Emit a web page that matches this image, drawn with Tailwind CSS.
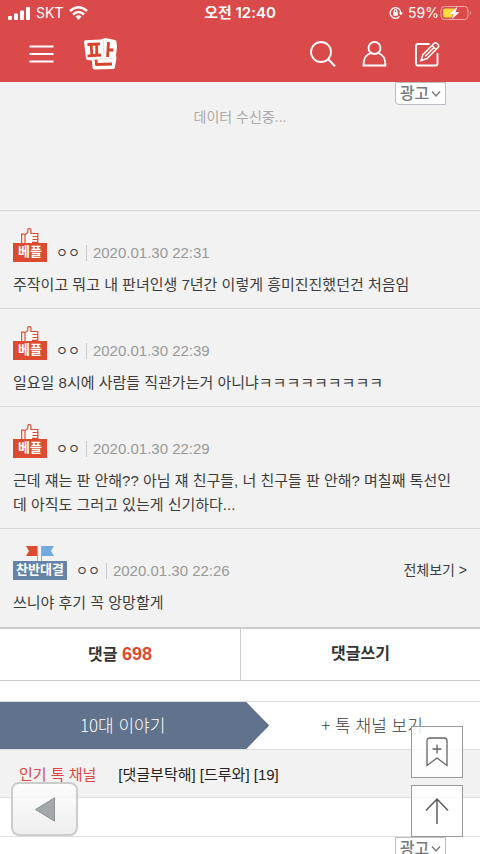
<!DOCTYPE html>
<html lang="ko">
<head>
<meta charset="utf-8">
<meta name="viewport" content="width=device-width, initial-scale=1">
<title>판</title>
<script src="https://cdn.jsdelivr.net/npm/@tailwindcss/browser@4"></script>
</head>
<body class="bg-white font-['Liberation_Sans','Noto_Sans_CJK_KR',sans-serif] text-[#3c3c3c]">
<svg class="hidden">
  <symbol id="thumb" viewBox="0 0 18 15">
    <path d="M1 15V6.500H4.500L7 4.500V1H10V5.500H16.500V15Z" fill="#fff"/>
    <path d="M.7 15V6.200H3.500M4 15V6.500L6.800 4.500V1.600Q7 .6 8.400.6T9.900 2V5.500H16.800V15M11.500 8.500H17M11.500 11.500H17M11 14.400H17" fill="none" stroke="#dc4a30" stroke-width="1.200"/>
  </symbol>
</svg>

<header class="bg-[#da4a4a] text-white">
  <div class="grid h-[26px] grid-cols-[1fr_auto_1fr] items-center px-2 font-['Inter','Noto_Sans_CJK_KR',sans-serif] leading-4">
    <div class="flex items-center gap-[6px]">
      <svg class="h-[13px] w-[22px]" viewBox="0 0 22 13" fill="#fff"><rect y="9" width="4" height="4" rx="1"/><rect x="6" y="6.500" width="4" height="6.500" rx="1"/><rect x="12" y="3.500" width="4" height="9.500" rx="1"/><rect x="18" width="4" height="13" rx="1"/></svg>
      <span class="text-sm">SKT</span>
      <svg class="h-[14px] w-[19px]" viewBox="0 0 19 14" fill="none" stroke="#fff" stroke-width="2.500"><path d="M1 5Q9.500-2.500 18 5M4 8.500Q9.500 3.500 15 8.500"/><path d="M6.500 10.500Q9.500 8 12.500 10.500L9.500 14Z" fill="#fff" stroke="none"/></svg>
    </div>
    <span class="text-[15px] font-semibold">오전 12:40</span>
    <div class="flex items-center justify-end gap-[5px]">
      <svg class="h-[14px] w-[14px]" viewBox="0 0 14 14" fill="none" stroke="#fff" stroke-width="1.300"><path d="M10.500 10.500A5.300 5.300 0 1 1 11.800 7"/><path d="M9.800 6.500H14L11.900 9.300Z" fill="#fff" stroke="none"/><rect x="4.200" y="6" width="4.600" height="3.700" rx=".5" fill="#fff" stroke="none"/><path d="M5.200 6V5a1.300 1.300 0 0 1 2.600 0V6"/></svg>
      <span class="text-sm">59%</span>
      <svg class="-ml-1 h-[16px] w-[32px]" viewBox="0 0 32 16"><rect x="1" y="1.500" width="27" height="13" rx="3.500" fill="none" stroke="#efa6a4"/><path d="M30 6Q32 8 30 10Z" fill="#efa6a4"/><path d="M5 3.500H15L10 9H13L11.500 12.500H5Q3 12.500 3 10.500V5.500Q3 3.500 5 3.500Z" fill="#fbdc3b"/><path d="M17.500 1.500L9.500 9H13.500L11.500 14.500L19.500 7.200H15.500Z" fill="#fff"/></svg>
    </div>
  </div>
  <nav class="flex h-14 items-center pr-[40px] pl-[29px]" aria-label="주 메뉴">
    <button type="button" aria-label="메뉴"><svg class="h-[18px] w-[25px]" viewBox="0 0 25 18" stroke="#fff" stroke-width="1.800"><path d="M.5 1.500H24.500M.5 9H24.500M.5 16.500H24.500"/></svg></button>
    <a href="#" class="ml-[30px]" aria-label="판"><svg class="h-8 w-[33px]" viewBox="0 0 33 32">
      <path d="M0 3.500Q0 2.500 1.500 2.300L17 1.500L21 0L31 2Q32.500 2.500 32.500 4L33 9L32 17L32.500 20L31 29Q30.800 31 29 31L10.500 31.500Q8.500 31.500 8.500 29.500L8 22.500L3.500 22Q2 21.500 2 20Z" fill="#fff"/>
      <g fill="none" stroke="#d9432c" stroke-width="2.800"><path d="M3.500 6.500L16 5.800M3.500 17.800L17 17M7.200 7L7.800 17M12.700 7V17"/><path d="M24.500 4L23.500 19M24 12H29.500"/><path d="M12 21.500L12.500 26.500L28 26"/></g>
      <path d="M19.500 2L20 19.500M10 21.500L29 20.500" stroke="#e3c8c3" stroke-width=".7" fill="none"/>
    </svg></a>
    <div class="ml-auto flex items-center gap-[26px]">
      <button type="button" aria-label="검색"><svg class="h-[26px] w-[26px]" viewBox="0 0 26 26" fill="none" stroke="#fff" stroke-width="1.800"><circle cx="11" cy="11" r="10"/><path d="M18 18L25 25.200" stroke-width="2"/></svg></button>
      <button type="button" aria-label="내 정보"><svg class="h-[26px] w-[26px]" viewBox="0 0 26 26" fill="none" stroke="#fff" stroke-width="1.800"><circle cx="12.500" cy="7" r="6"/><path d="M9 12Q1.500 14 1.500 24.500H23.500Q23.500 14 16 12"/></svg></button>
      <button type="button" aria-label="글쓰기"><svg class="h-[26px] w-[26px]" viewBox="0 0 26 26" fill="none" stroke="#fff" stroke-width="1.800"><path d="M15.500 3H4Q2 3 2 5V22.500Q2 24.500 4 24.500H21.500Q23.500 24.500 23.500 22.500V12"/><path d="M7 19.500L9 13.500L20 2.500Q21.500 1 23 2.500L24 3.500Q25.500 5 24 6.500L13 17.500ZM18 4.500L22 8.500M11 15.500L20 6.500" stroke-width="1.500"/></svg></button>
    </div>
  </nav>
</header>

<main>
  <section class="relative h-[129px] border-b border-[#d6d6d6] bg-[#f2f2f2] pt-6 text-center">
    <button type="button" class="absolute top-0 right-[34px] flex h-[23px] w-[51px] items-center justify-center gap-[2px] rounded-bl border border-[#b9bec5] bg-white text-[16px] font-medium text-[#757a80]">광고<svg class="h-2 w-[10px]" viewBox="0 0 10 8" fill="none" stroke="#757a80" stroke-width="1.400"><path d="M1 1.500L5 6L9 1.500"/></svg></button>
    <p class="text-[14px] leading-[23px] text-[#aaa]">데이터 수신중...</p>
  </section>

  <section class="bg-[#f2f2f2]" aria-label="베스트 댓글">
    <article class="border-b border-[#d6d6d6] px-[13px] pt-[17px] pb-[11px]">
      <div class="flex items-end">
        <div class="flex w-[34px] flex-col items-center"><svg class="h-[15px] w-[18px]"><use href="#thumb"/></svg><span class="h-[19px] w-full bg-[#dc4a30] text-center text-[13px] leading-[18px] font-bold text-white">베플</span></div>
        <div class="flex h-[19px] items-center"><span class="ml-[9px] text-[13px]">ㅇㅇ</span><span class="mx-[6px] h-4 w-px bg-[#ccc]"></span><time class="text-[15px] leading-5 text-[#999]">2020.01.30 22:31</time></div>
      </div>
      <p class="mt-[11px] text-[15px] leading-6">주작이고 뭐고 내 판녀인생 7년간 이렇게 흥미진진했던건 처음임</p>
    </article>
    <article class="border-b border-[#d6d6d6] px-[13px] pt-[17px] pb-[11px]">
      <div class="flex items-end">
        <div class="flex w-[34px] flex-col items-center"><svg class="h-[15px] w-[18px]"><use href="#thumb"/></svg><span class="h-[19px] w-full bg-[#dc4a30] text-center text-[13px] leading-[18px] font-bold text-white">베플</span></div>
        <div class="flex h-[19px] items-center"><span class="ml-[9px] text-[13px]">ㅇㅇ</span><span class="mx-[6px] h-4 w-px bg-[#ccc]"></span><time class="text-[15px] leading-5 text-[#999]">2020.01.30 22:39</time></div>
      </div>
      <p class="mt-[11px] text-[15px] leading-6">일요일 8시에 사람들 직관가는거 아니냐ㅋㅋㅋㅋㅋㅋㅋㅋㅋ</p>
    </article>
    <article class="border-b border-[#d6d6d6] px-[13px] pt-[17px] pb-[11px]">
      <div class="flex items-end">
        <div class="flex w-[34px] flex-col items-center"><svg class="h-[15px] w-[18px]"><use href="#thumb"/></svg><span class="h-[19px] w-full bg-[#dc4a30] text-center text-[13px] leading-[18px] font-bold text-white">베플</span></div>
        <div class="flex h-[19px] items-center"><span class="ml-[9px] text-[13px]">ㅇㅇ</span><span class="mx-[6px] h-4 w-px bg-[#ccc]"></span><time class="text-[15px] leading-5 text-[#999]">2020.01.30 22:29</time></div>
      </div>
      <p class="mt-[11px] text-[15px] leading-6">근데 쟤는 판 안해?? 아님 쟤 친구들, 너 친구들 판 안해? 며칠째 톡선인<br>데 아직도 그러고 있는게 신기하다...</p>
    </article>
    <article class="px-[13px] pt-[17px] pb-3">
      <div class="flex items-end">
        <div class="flex w-[54px] flex-col items-center"><svg class="h-[15px] w-[28px]" viewBox="0 0 28 15"><path d="M0 0H11V10H0L3 5Z" fill="#dc4a30"/><path d="M16 0H28L25 5L28 10H16Z" fill="#72a9e0"/><path d="M11.500 0V15M15.500 0V15" stroke="#aaa"/></svg><span class="h-[19px] w-full bg-[#6483a6] text-center text-[13px] leading-[18px] font-bold whitespace-nowrap text-white">찬반대결</span></div>
        <div class="flex h-[19px] flex-1 items-center"><span class="ml-[9px] text-[13px]">ㅇㅇ</span><span class="mx-[6px] h-4 w-px bg-[#ccc]"></span><time class="text-[15px] leading-5 text-[#999]">2020.01.30 22:26</time><a href="#" class="ml-auto text-[14px]">전체보기 &gt;</a></div>
      </div>
      <p class="mt-[11px] text-[15px] leading-6">쓰니야 후기 꼭 앙망할게</p>
    </article>
  </section>

  <div class="grid grid-cols-2 border-t-2 border-b border-[#ccc] text-center text-[16px] leading-[50px] font-bold text-[#333]">
    <a href="#">댓글 <span class="text-[18px] text-[#dc4a30]">698</span></a>
    <a href="#" class="border-l border-[#ccc]">댓글쓰기</a>
  </div>

  <section class="mt-5 border-b border-[#ddd]">
    <div class="flex h-[49px] border-t border-b border-[#ddd] font-['Noto_Sans_CJK_KR',sans-serif] text-[17px] leading-[45px]">
      <a href="#" class="w-[56.1%] bg-[#60728c] pr-6 text-center font-light text-white [clip-path:polygon(0_0,calc(100%-23px)_0,100%_50%,calc(100%-23px)_100%,0_100%)]">10대 이야기</a>
      <a href="#" class="flex-1 pl-[52px] font-light">+ 톡 채널 보기</a>
    </div>
    <div class="flex h-12 gap-[22px] border-b border-[#ddd] bg-[#f2f2f2] pl-[19px] text-[15px] leading-[50px]">
      <strong class="font-normal text-[#e04545]">인기 톡 채널</strong>
      <a href="#" class="text-[#222]">[댓글부탁해] [드루와] [19]</a>
    </div>
    <div class="h-[38px]"></div>
  </section>
  <section class="relative h-[17px] overflow-hidden">
    <button type="button" class="absolute top-0 right-[34px] flex h-[23px] w-[51px] items-center justify-center gap-[2px] rounded-bl border border-[#b9bec5] bg-white text-[16px] font-medium text-[#757a80]">광고<svg class="h-2 w-[10px]" viewBox="0 0 10 8" fill="none" stroke="#757a80" stroke-width="1.400"><path d="M1 1.500L5 6L9 1.500"/></svg></button>
  </section>
</main>

<button type="button" aria-label="뒤로" class="fixed bottom-[18px] left-[11px] flex h-[54px] w-[67px] items-center justify-center rounded-lg border-2 border-[#ccc] bg-linear-to-b from-white/85 to-[#ebebeb]/85"><svg class="h-[25px] w-[20px]" viewBox="0 0 20 25"><path d="M.5 12.500L19.500.8V24.200Z" fill="#a3a8ab" stroke="#8c9194"/></svg></button>
<div class="fixed right-[17px] bottom-[17px] flex flex-col gap-[7px]">
  <button type="button" aria-label="스크랩" class="flex h-[52px] w-[52px] items-center justify-center border border-[#999] bg-white/80"><svg class="h-[30px] w-[22px]" viewBox="0 0 22 30" fill="none" stroke="#666" stroke-width="1.300"><path d="M1 28.500V4Q1 1 4 1H18Q21 1 21 4V28.500L11 21Z"/><path d="M11 7.500V16.500M6.500 12H15.500"/></svg></button>
  <button type="button" aria-label="맨 위로" class="flex h-[52px] w-[52px] items-center justify-center border border-[#999] bg-white/80"><svg class="h-[26px] w-[24px]" viewBox="0 0 24 26" fill="none" stroke="#555" stroke-width="1.400"><path d="M12 1V26M1 12.500L12 1L23 12.500"/></svg></button>
</div>
</body>
</html>
